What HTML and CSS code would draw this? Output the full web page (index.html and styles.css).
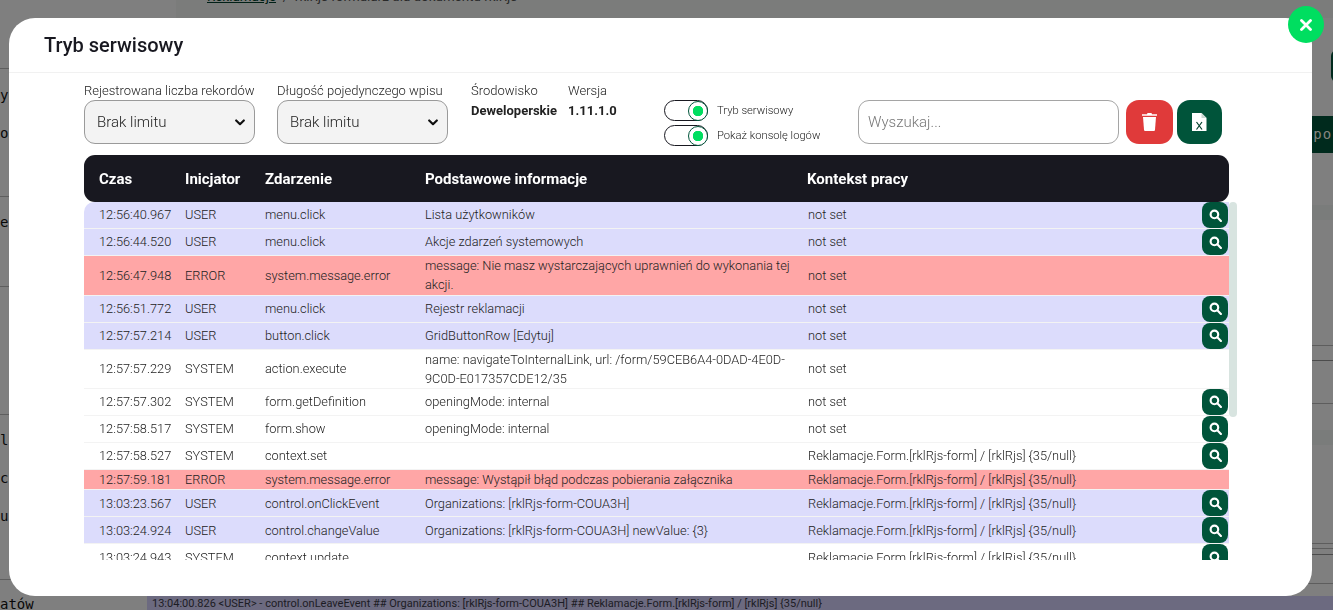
FILE: index.html
```html
<!DOCTYPE html>
<html lang="pl">
<head>
    <meta charset="UTF-8">
    <meta name="viewport" content="width=device-width, initial-scale=1.0">
    <title>Tryb serwisowy</title>
    <link rel="stylesheet" href="styles.css">
</head>
<body>
    <div class="page">
        <aside class="sidebar">
            <div class="side-line sl-1"></div>
            <div class="side-line sl-2"></div>
            <div class="side-line sl-3"></div>
            <div class="side-line sl-4"></div>
            <div class="side-line sl-5"></div>
            <div class="side-item side-y">y</div>
            <div class="side-item side-o">o</div>
            <div class="side-item side-e">e</div>
            <div class="side-item side-l">l</div>
            <div class="side-item side-c">c</div>
            <div class="side-item side-u">u</div>
            <div class="side-item side-a">atów</div>
        </aside>
        <main class="main">
            <div class="breadcrumb"><a>Reklamacje</a> &nbsp;/&nbsp; rklRjs formularz dla dokumentu rklRjs</div>
            <div class="page-btn"></div>
            <div class="page-bar">Eksport</div>
            <div class="page-lines">
                <div class="band band-1"></div>
                <div class="line line-1"></div>
                <div class="line line-2"></div>
                <div class="line line-3"></div>
                <div class="band band-2"></div>
                <div class="line line-4"></div>
                <div class="line line-5"></div>
                <div class="line line-6"></div>
                <div class="line line-7"></div>
            </div>
            <div class="console-line">13:04:00.826 &lt;USER&gt; - control.onLeaveEvent ## Organizations: [rklRjs-form-COUA3H] ## Reklamacje.Form.[rklRjs-form] / [rklRjs] {35/null}</div>
        </main>
    </div>

    <div class="overlay"></div>

    <div class="modal">
        <div class="modal-header">
            <h1>Tryb serwisowy</h1>
        </div>
        <div class="modal-body">
            <div class="toolbar">
                <div class="field field-records">
                    <label>Rejestrowana liczba rekordów</label>
                    <select><option>Brak limitu</option></select>
                </div>
                <div class="field field-length">
                    <label>Długość pojedynczego wpisu</label>
                    <select><option>Brak limitu</option></select>
                </div>
                <div class="info info-env">
                    <span>Środowisko</span>
                    <strong>Deweloperskie</strong>
                </div>
                <div class="info info-ver">
                    <span>Wersja</span>
                    <strong>1.11.1.0</strong>
                </div>
                <div class="toggles">
                    <div class="toggle-row">
                        <span class="toggle"><i></i></span>
                        <span class="toggle-label">Tryb serwisowy</span>
                    </div>
                    <div class="toggle-row">
                        <span class="toggle"><i></i></span>
                        <span class="toggle-label">Pokaż konsolę logów</span>
                    </div>
                </div>
                <input class="search" type="text" placeholder="Wyszukaj...">
                <button class="tool-btn trash-btn" aria-label="Usuń">
                    <svg width="15" height="18" viewBox="0 0 15 18"><path fill="#fff" d="M0 1.300h5L5.500 0h4L10 1.300h5v1.500H0z"/><path fill="#fff" d="M1 4h13l-1 12.700c-.1.800-.6 1.300-1.400 1.300H3.400c-.8 0-1.300-.5-1.400-1.300z"/></svg>
                </button>
                <button class="tool-btn xls-btn" aria-label="Eksport">
                    <svg width="15" height="18" viewBox="0 0 15 18"><path fill="#fff" d="M0 0h9.500L14.500 5v13H0z"/><path fill="#c9d8d2" d="M9.500 0v5h5z"/><path fill="none" stroke="#00402c" stroke-width="1.200" d="M4.500 9l5.500 7.500M10 9l-5.500 7.500"/></svg>
                </button>
            </div>

            <div class="log-head">
                <div>Czas</div>
                <div>Inicjator</div>
                <div>Zdarzenie</div>
                <div>Podstawowe informacje</div>
                <div>Kontekst pracy</div>
            </div>

            <div class="log-wrap">
                <div class="log-body">
                    <div class="log-row user"><div>12:56:40.967</div><div>USER</div><div>menu.click</div><div>Lista użytkowników</div><div class="ctx">not set</div><button class="zoom-btn"><svg viewBox="0 0 12 12"><circle cx="5" cy="5" r="3.500"/><path d="M7.700 7.700L11 11"/></svg></button></div>
                    <div class="log-row user"><div>12:56:44.520</div><div>USER</div><div>menu.click</div><div>Akcje zdarzeń systemowych</div><div class="ctx">not set</div><button class="zoom-btn"><svg viewBox="0 0 12 12"><circle cx="5" cy="5" r="3.500"/><path d="M7.700 7.700L11 11"/></svg></button></div>
                    <div class="log-row error"><div>12:56:47.948</div><div>ERROR</div><div>system.message.error</div><div>message: Nie masz wystarczających uprawnień do wykonania tej akcji.</div><div class="ctx">not set</div></div>
                    <div class="log-row user"><div>12:56:51.772</div><div>USER</div><div>menu.click</div><div>Rejestr reklamacji</div><div class="ctx">not set</div><button class="zoom-btn"><svg viewBox="0 0 12 12"><circle cx="5" cy="5" r="3.500"/><path d="M7.700 7.700L11 11"/></svg></button></div>
                    <div class="log-row user"><div>12:57:57.214</div><div>USER</div><div>button.click</div><div>GridButtonRow [Edytuj]</div><div class="ctx">not set</div><button class="zoom-btn"><svg viewBox="0 0 12 12"><circle cx="5" cy="5" r="3.500"/><path d="M7.700 7.700L11 11"/></svg></button></div>
                    <div class="log-row"><div>12:57:57.229</div><div>SYSTEM</div><div>action.execute</div><div>name: navigateToInternalLink, url: /form/59CEB6A4-0DAD-4E0D-9C0D-E017357CDE12/35</div><div class="ctx">not set</div></div>
                    <div class="log-row"><div>12:57:57.302</div><div>SYSTEM</div><div>form.getDefinition</div><div>openingMode: internal</div><div class="ctx">not set</div><button class="zoom-btn"><svg viewBox="0 0 12 12"><circle cx="5" cy="5" r="3.500"/><path d="M7.700 7.700L11 11"/></svg></button></div>
                    <div class="log-row"><div>12:57:58.517</div><div>SYSTEM</div><div>form.show</div><div>openingMode: internal</div><div class="ctx">not set</div><button class="zoom-btn"><svg viewBox="0 0 12 12"><circle cx="5" cy="5" r="3.500"/><path d="M7.700 7.700L11 11"/></svg></button></div>
                    <div class="log-row"><div>12:57:58.527</div><div>SYSTEM</div><div>context.set</div><div></div><div class="ctx">Reklamacje.Form.[rklRjs-form] / [rklRjs] {35/null}</div><button class="zoom-btn"><svg viewBox="0 0 12 12"><circle cx="5" cy="5" r="3.500"/><path d="M7.700 7.700L11 11"/></svg></button></div>
                    <div class="log-row error"><div>12:57:59.181</div><div>ERROR</div><div>system.message.error</div><div>message: Wystąpił błąd podczas pobierania załącznika</div><div class="ctx">Reklamacje.Form.[rklRjs-form] / [rklRjs] {35/null}</div></div>
                    <div class="log-row user"><div>13:03:23.567</div><div>USER</div><div>control.onClickEvent</div><div>Organizations: [rklRjs-form-COUA3H]</div><div class="ctx">Reklamacje.Form.[rklRjs-form] / [rklRjs] {35/null}</div><button class="zoom-btn"><svg viewBox="0 0 12 12"><circle cx="5" cy="5" r="3.500"/><path d="M7.700 7.700L11 11"/></svg></button></div>
                    <div class="log-row user"><div>13:03:24.924</div><div>USER</div><div>control.changeValue</div><div>Organizations: [rklRjs-form-COUA3H] newValue: {3}</div><div class="ctx">Reklamacje.Form.[rklRjs-form] / [rklRjs] {35/null}</div><button class="zoom-btn"><svg viewBox="0 0 12 12"><circle cx="5" cy="5" r="3.500"/><path d="M7.700 7.700L11 11"/></svg></button></div>
                    <div class="log-row"><div>13:03:24.943</div><div>SYSTEM</div><div>context.update</div><div></div><div class="ctx">Reklamacje.Form.[rklRjs-form] / [rklRjs] {35/null}</div><button class="zoom-btn"><svg viewBox="0 0 12 12"><circle cx="5" cy="5" r="3.500"/><path d="M7.700 7.700L11 11"/></svg></button></div>
                </div>
                <div class="scroll-thumb"></div>
            </div>
        </div>
    </div>

    <button class="close-btn" aria-label="Zamknij">
        <svg width="12" height="12" viewBox="0 0 12 12"><path d="M1.500 1.500l9 9M10.500 1.500l-9 9" stroke="#fff" stroke-width="2.800" stroke-linecap="round"/></svg>
    </button>
</body>
</html>
```

FILE: styles.css
```css
* {
    box-sizing: border-box;
}
html, body {
    margin: 0;
    height: 100%;
    overflow: hidden;
}
body {
    font-family: Roboto, "Noto Sans", sans-serif;
    font-size: 12.800px;
    color: #333;
    background: #fff;
}

/* strona pod modalem */
.page {
    display: flex;
    height: 610px;
}
.sidebar {
    width: 147px;
    position: relative;
    background: #fff;
    font-family: "DejaVu Sans Mono", monospace;
    font-size: 14px;
    color: #111;
}
.side-line {
    position: absolute;
    left: 0;
    width: 20px;
    height: 1px;
    background: #bdbdbd;
}
.sl-1 { top: 68px; }
.sl-2 { top: 196px; }
.sl-3 { top: 286px; }
.sl-4 { top: 414px; }
.sl-5 { top: 579px; }
.side-item {
    position: absolute;
    left: 0;
}
.side-y { top: 87px; }
.side-o { top: 125px; }
.side-e { top: 214px; }
.side-l { top: 432px; }
.side-c { top: 470px; }
.side-u { top: 508px; }
.side-a { top: 596px; }
.main {
    flex: 1;
    position: relative;
    background: #fff;
}
.breadcrumb {
    height: 21px;
    margin-top: -3px;
    margin-left: 29px;
    padding-left: 31px;
    background: #f6f8f7;
    font-size: 13.400px;
    line-height: 0;
    color: #555;
    white-space: nowrap;
}
.breadcrumb a {
    color: #00402c;
    text-decoration: underline;
}
.page-btn {
    position: absolute;
    right: -10px;
    top: 50px;
    width: 12px;
    height: 32px;
    background: #00543a;
    border-radius: 8px;
}
.page-bar {
    position: absolute;
    z-index: 10;
    right: -30px;
    top: 116px;
    width: 93px;
    height: 37px;
    padding: 10px 0 0 15px;
    background: #002a1d;
    color: #858580;
    font-size: 14px;
    font-weight: 500;
    letter-spacing: 1px;
    font-family: "DejaVu Sans Mono", monospace;
    overflow: hidden;
}
.line {
    position: absolute;
    right: 0;
    width: 30px;
    height: 1px;
    background: #bbb;
}
.line-1 { top: 345px; }
.line-2 { top: 360px; background: #999; }
.line-3 { top: 403px; }
.line-4 { top: 543px; }
.line-5 { top: 548px; }
.line-6 { top: 554px; background: #999; }
.line-7 { top: 583px; }
.band {
    position: absolute;
    right: 0;
    width: 30px;
    height: 15px;
    background: #f4f8f6;
}
.band-1 { top: 205px; }
.band-2 { top: 430px; }
.console-line {
    position: absolute;
    z-index: 10;
    left: 0;
    right: 0;
    bottom: 0;
    height: 14px;
    padding-left: 5px;
    background: #6c6a80;
    color: #1c1c24;
    font-size: 11px;
    line-height: 15px;
    white-space: nowrap;
    overflow: hidden;
}

.overlay {
    position: fixed;
    inset: 0;
    z-index: 5;
    background: rgba(0, 0, 0, 0.5);
}

/* modal */
.modal {
    position: fixed;
    z-index: 11;
    left: 9px;
    top: 18px;
    width: 1303px;
    height: 578px;
    background: #fff;
    border-radius: 26px;
    overflow: hidden;
}
.modal-header {
    height: 55px;
    padding: 15px 35px 0;
    border-bottom: 1px solid #f1f1f1;
}
.modal-header h1 {
    margin: 0;
    font-size: 20px;
    line-height: 24px;
    font-weight: 500;
    color: #181820;
}
.modal-body {
    padding: 9px 0 0 75px;
}

.toolbar {
    display: flex;
    align-items: flex-start;
    height: 73px;
}
.field label {
    display: block;
    font-weight: 300;
    font-size: 13px;
    line-height: 18px;
    color: #222;
    white-space: nowrap;
}
.field select {
    display: block;
    width: 171px;
    height: 44px;
    padding: 0 12px;
    font-family: inherit;
    font-size: 15px;
    font-weight: 300;
    color: #222;
    appearance: none;
    background: #f3f3f3 url("data:image/svg+xml,%3Csvg xmlns='http://www.w3.org/2000/svg' viewBox='0 0 10 7'%3E%3Cpath d='M1.200 1.500L5 5.200l3.800-3.700' fill='none' stroke='%23111' stroke-width='2.200' stroke-linecap='round' stroke-linejoin='round'/%3E%3C/svg%3E") no-repeat right 9px center / 10px 7px;
    border: 1px solid #9a9a9a;
    border-radius: 11px;
}
.field-records {
    margin-right: 22px;
}
.field-length {
    margin-right: 23px;
}
.info span {
    display: block;
    font-weight: 300;
    font-size: 13px;
    line-height: 18px;
    color: #222;
}
.info strong {
    display: block;
    margin-top: 2px;
    font-size: 13px;
    line-height: 18px;
    font-weight: 700;
    color: #222;
    white-space: nowrap;
}
.info-env {
    width: 97px;
}
.info-ver {
    width: 96px;
}
.toggles {
    width: 194px;
    padding-top: 18px;
    display: flex;
    flex-direction: column;
    gap: 4px;
}
.toggle-row {
    display: flex;
    align-items: center;
    gap: 9px;
    height: 21px;
}
.toggle {
    width: 44px;
    height: 21px;
    border: 1.500px solid #181820;
    border-radius: 11px;
    background: #fff;
    display: flex;
    justify-content: flex-end;
    align-items: center;
}
.toggle i {
    display: block;
    width: 20px;
    height: 20px;
    margin-right: -1px;
    border: 1.500px solid #00543a;
    border-radius: 50%;
    background: radial-gradient(circle, #00de60 0, #00de60 5px, #fff 5.500px);
}
.toggle-label {
    font-size: 11.200px;
    font-weight: 300;
    color: #222;
    white-space: nowrap;
}
.search {
    width: 261px;
    height: 44px;
    margin-top: 18px;
    padding: 0 9px;
    font-family: inherit;
    font-size: 15px;
    font-weight: 300;
    border: 1px solid #a5a5a5;
    border-radius: 11px;
    outline: none;
}
.search::placeholder {
    color: #777;
}
.tool-btn {
    height: 44px;
    margin-top: 18px;
    padding: 0;
    border: none;
    border-radius: 13px;
    display: flex;
    align-items: center;
    justify-content: center;
}
.trash-btn {
    width: 47px;
    margin-left: 7px;
    background: #e03a3a;
}
.xls-btn {
    width: 45px;
    margin-left: 4px;
    background: #00543a;
}

/* tabela logow */
.log-head, .log-row {
    display: grid;
    grid-template-columns: 86px 80px 160px 382px 1fr;
    padding-left: 15px;
}
.log-head {
    width: 1145px;
    height: 47px;
    align-items: center;
    background: #181820;
    border-radius: 11px;
    color: #fff;
    font-size: 15px;
    font-weight: 700;
}
.log-wrap {
    position: relative;
    width: 1153px;
}
.log-body {
    width: 1145px;
    height: 358px;
    padding-top: 0.100px;
    overflow: hidden;
}
.scroll-thumb {
    position: absolute;
    top: 0;
    right: 0;
    width: 8px;
    height: 215px;
    background: #d8e4e0;
    border-radius: 4px;
}
.log-row {
    position: relative;
    align-items: center;
    min-height: 20px;
    border-bottom: 1px solid #f3f3f3;
    line-height: 19.200px;
    font-weight: 300;
    color: #222;
}
.log-row:first-child {
    border-radius: 10px 0 0 0;
}
.log-row > div:nth-child(4) {
    padding-right: 15px;
}
.log-row .ctx {
    padding-left: 1px;
}
.log-row.user {
    background: #dcdcfc;
}
.log-row.error {
    background: #ffa6a6;
}
.log-row:has(.zoom-btn) {
    height: 27px;
}
.zoom-btn {
    position: absolute;
    right: 1px;
    top: 0;
    width: 26px;
    height: 26px;
    padding: 0;
    border: none;
    border-radius: 8px;
    background: #00543a;
    display: flex;
    align-items: center;
    justify-content: center;
}
.zoom-btn svg {
    width: 13px;
    height: 13px;
    fill: none;
    stroke: #fff;
    stroke-width: 2;
    stroke-linecap: round;
}

.close-btn {
    position: fixed;
    z-index: 12;
    left: 1288px;
    top: 6px;
    width: 36px;
    height: 37px;
    padding: 0;
    border: none;
    border-radius: 50%;
    background: #00de60;
    display: flex;
    align-items: center;
    justify-content: center;
}
```
